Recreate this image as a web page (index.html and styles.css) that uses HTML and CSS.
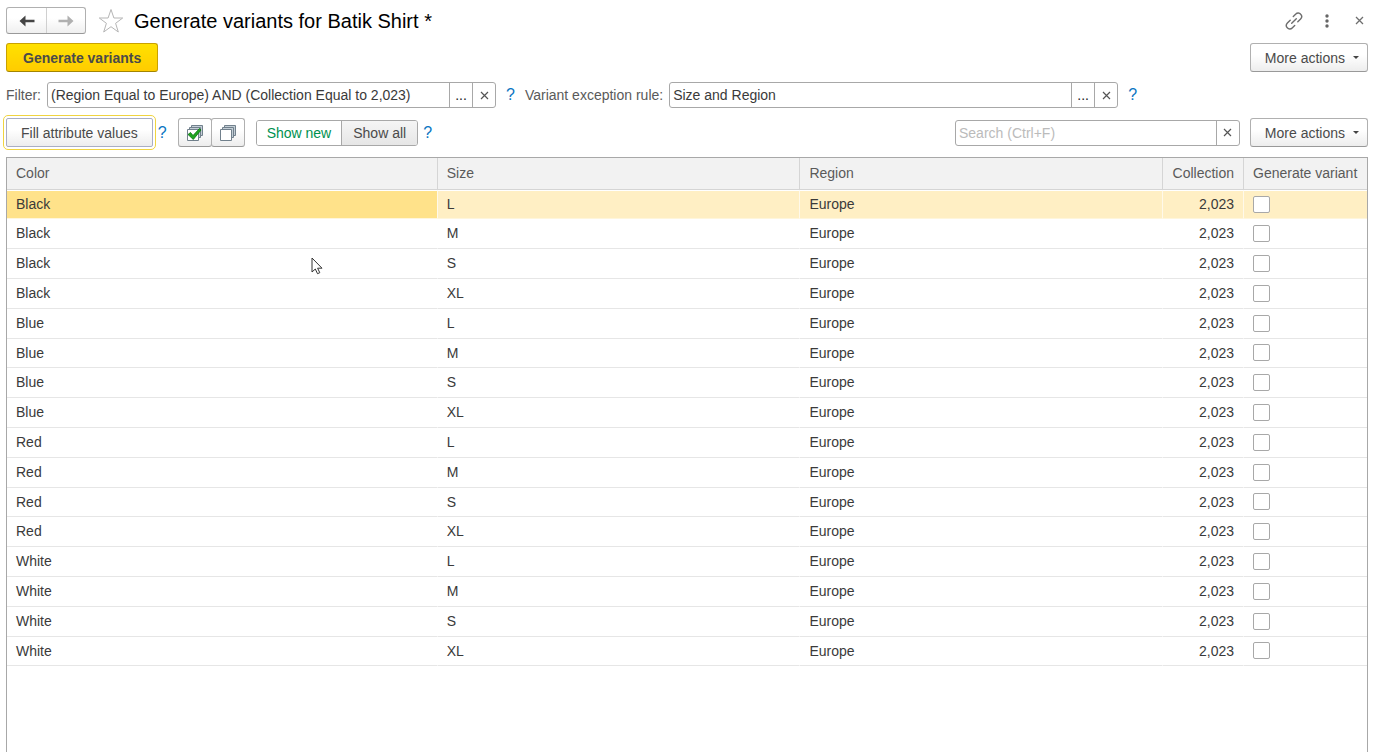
FILE: index.html
```html
<!DOCTYPE html>
<html lang="en">
<head>
    <meta charset="utf-8" />
    <meta name="viewport" content="width=device-width, initial-scale=1" />
    <title>Generate variants for Batik Shirt *</title>
    <link rel="stylesheet" href="styles.css">
    <script src="script.js" defer></script>
</head>
<body>

    <header class="titlebar">
        <div class="history">
            <button class="history__button" type="button" aria-label="Back">
                <svg width="16" height="12" viewBox="0 0 16 12"><path d="M6.500 0.500 0.500 6l6 5.500V7.300H15.500V4.700H6.500z" fill="#444"/></svg>
            </button>
            <button class="history__button" type="button" aria-label="Forward" disabled>
                <svg width="16" height="12" viewBox="0 0 16 12"><path d="M9.500 0.500 15.500 6l-6 5.500V7.300H0.500V4.700H9.500z" fill="#b0b0b0"/></svg>
            </button>
        </div>
        <button class="icon-button" type="button" aria-label="Add to favorites">
            <svg width="26" height="26" viewBox="0 0 26 26"><path d="M13 1.500 15.900 10h8.800l-7.100 5.300 2.700 8.700-7.300-5.300L5.700 24l2.700-8.700L1.300 10h8.800z" fill="#fff" stroke="#b5b5b5"/></svg>
        </button>
        <h1 class="titlebar__title">Generate variants for Batik Shirt *</h1>
        <div class="titlebar__tools">
            <button class="icon-button" type="button" aria-label="Get link">
                <svg width="18" height="18" viewBox="0 0 18 18" fill="none" stroke="#6e6e6e" stroke-width="1.400" stroke-linecap="round"><path d="M8.300 4.400 10.800 2a3.300 3.300 0 0 1 4.900.2 3.400 3.400 0 0 1-.1 4.700L12.800 9.700"/><path d="M9.700 13.600 7.200 16a3.300 3.300 0 0 1-4.900-.2 3.400 3.400 0 0 1 .1-4.700L5.200 8.300"/><path d="M6.700 11.300l4.600-4.600"/></svg>
            </button>
            <button class="icon-button" type="button" aria-label="More">
                <svg width="4" height="14" viewBox="0 0 4 14" fill="#666"><circle cx="2" cy="2" r="1.700"/><circle cx="2" cy="7" r="1.700"/><circle cx="2" cy="12" r="1.700"/></svg>
            </button>
            <button class="icon-button" type="button" aria-label="Close">
                <svg width="9" height="9" viewBox="0 0 9 9" stroke="#6e6e6e" stroke-width="1.300"><path d="M1 1l7 7M8 1 1 8"/></svg>
            </button>
        </div>
    </header>

    <main class="form">
        <div class="bar">
            <button class="button button--primary" type="button">Generate variants</button>
            <button class="button button--more" type="button">More actions</button>
        </div>

        <div class="filters">
            <label class="filters__label" for="filter">Filter:</label>
            <div class="field">
                <input class="field__input" id="filter" type="text" value="(Region Equal to Europe) AND (Collection Equal to 2,023)">
                <button class="field__button field__button--dots" type="button" aria-label="Select">...</button>
                <button class="field__button" type="button" aria-label="Clear filter">
                    <svg width="9" height="9" viewBox="0 0 9 9" stroke="#555" stroke-width="1.200"><path d="M1 1l7 7M8 1 1 8"/></svg>
                </button>
            </div>
            <a class="help" href="#">?</a>
            <label class="filters__label" for="rule">Variant exception rule:</label>
            <div class="field">
                <input class="field__input" id="rule" type="text" value="Size and Region">
                <button class="field__button field__button--dots" type="button" aria-label="Select rule">...</button>
                <button class="field__button" type="button" aria-label="Clear rule">
                    <svg width="9" height="9" viewBox="0 0 9 9" stroke="#555" stroke-width="1.200"><path d="M1 1l7 7M8 1 1 8"/></svg>
                </button>
            </div>
            <a class="help" href="#">?</a>
        </div>

        <div class="bar">
            <button class="button button--focused" type="button">Fill attribute values</button>
            <a class="help help--near" href="#">?</a>
            <div class="checks">
                <button class="button button--icon" type="button" aria-label="Select all">
                    <svg width="18" height="18" viewBox="0 0 18 18"><g stroke="#71808c" fill="#c3ced6"><path d="M5.500 1.500h11v10h-11z"/><path d="M3.500 3.500h11v10h-11z"/><path d="M1.500 5.500h11v11h-11z" fill="#fff"/></g><path d="M2 10.500 4.500 8.500 7 11.500 13.500 4.500 15 6 7.300 15.500z" fill="#1fa51f" stroke="#08700e" stroke-width=".8"/></svg>
                </button>
                <button class="button button--icon" type="button" aria-label="Clear all">
                    <svg width="18" height="18" viewBox="0 0 18 18"><g stroke="#71808c" fill="#c3ced6"><path d="M5.500 1.500h11v10h-11z"/><path d="M3.500 3.500h11v10h-11z"/><path d="M1.500 5.500h11v11h-11z" fill="#fff"/></g></svg>
                </button>
            </div>
            <div class="toggle">
                <button class="toggle__item toggle__item--active" type="button" aria-pressed="true">Show new</button>
                <button class="toggle__item" type="button" aria-pressed="false">Show all</button>
            </div>
            <a class="help help--near" href="#">?</a>
            <div class="bar__right">
                <div class="field field--search">
                    <input class="field__input" type="text" placeholder="Search (Ctrl+F)" aria-label="Search">
                    <button class="field__button" type="button" aria-label="Clear search">
                        <svg width="9" height="9" viewBox="0 0 9 9" stroke="#555" stroke-width="1.200"><path d="M1 1l7 7M8 1 1 8"/></svg>
                    </button>
                </div>
                <button class="button button--more" type="button">More actions</button>
            </div>
        </div>
    </main>

    <div class="list">
        <table class="grid">
            <thead>
                <tr>
                    <th class="grid__color">Color</th>
                    <th>Size</th>
                    <th>Region</th>
                    <th class="grid__collection">Collection</th>
                    <th class="grid__generate">Generate variant</th>
                </tr>
            </thead>
            <tbody id="variants"></tbody>
        </table>
    </div>

    <svg class="cursor" width="12" height="18" viewBox="0 0 12 18"><path d="M1 1v14l3.300-3 2.200 4.700 2.300-1-2.200-4.500H11z" fill="#fff" stroke="#333"/></svg>

</body>
</html>
```
FILE: styles.css
```css
* {
    box-sizing: border-box; margin: 0; padding: 0;
}
body {
    display: flex;
    flex-direction: column;
    height: 100vh;
    padding: 7px 10px 0 6px;
    overflow: hidden;
    background: #fff;
    color: #4a4a4a;
    font: 14px/18px "Liberation Sans", Arial, sans-serif;
}
button, input {
    font: inherit; color: inherit;
}
svg {
    display: block;
}

/* title */
.titlebar {
    display: flex;
    align-items: center;
    height: 27px;
}
.history {
    display: flex;
    height: 27px;
    margin-right: 12px;
    border: 1px solid #b0b0b0;
    border-bottom-color: #999;
    border-radius: 3px;
    background: linear-gradient(#fff 40%, #efefef);
}
.history__button {
    display: flex;
    align-items: center;
    justify-content: center;
    width: 39px;
    border: 0;
    background: none;
}
.history__button + .history__button {
    border-left: 1px solid #d0d0d0;
}
.icon-button {
    border: 0; background: none;
}
.titlebar__title {
    margin-left: 10px;
    color: #000;
    font-size: 20px;
    font-weight: normal;
}
.titlebar__tools {
    display: flex;
    align-items: center;
    margin: 0 -8px 0 auto;
}
.titlebar__tools .icon-button {
    display: flex;
    justify-content: center;
    width: 33px;
}

/* command bars */
.form {
    display: flex;
    flex-direction: column;
    gap: 10px;
    padding: 9px 0 10px;
}
.bar, .bar__right, .filters {
    display: flex;
    align-items: center;
}
.bar__right {
    flex: 0 1 413px;
    gap: 10px;
    margin-left: auto;
}
.button {
    height: 29px;
    padding: 0 14px;
    border: 1px solid #b0b0b0;
    border-bottom-color: #999;
    border-radius: 3px;
    background: linear-gradient(#fff 40%, #ededed);
    white-space: nowrap;
}
.button--primary {
    padding: 0 16px;
    border-color: #c9a100;
    border-bottom-color: #a38500;
    background: linear-gradient(#ffe100, #ffcc00);
    font-weight: bold;
}
.button--more {
    display: flex;
    align-items: center;
    gap: 8px;
    padding: 0 8px 0 14px;
}
.button--more:after {
    content: "";
    border: 3px solid transparent;
    border-top-color: #444;
    border-bottom: 0;
}
.bar .button--more:last-child {
    margin-left: auto;
}
.button--focused {
    outline: 1px solid #f0d440;
    outline-offset: 2px;
    border-color: #a9aec4;
    border-radius: 2px;
}
.checks {
    display: flex;
    margin: 0 11px;
}
.button--icon {
    display: flex;
    align-items: center;
    justify-content: center;
    width: 34px;
    padding: 0;
}
.button--icon + .button--icon {
    margin-left: -1px;
}
.toggle {
    display: flex;
    height: 26px;
    border: 1px solid #a8a8a8;
    border-radius: 3px;
    overflow: hidden;
}
.toggle__item {
    padding: 0 11px;
    border: 0;
    background: linear-gradient(#f5f5f5, #e6e6e6);
}
.toggle__item + .toggle__item {
    border-left: 1px solid #a8a8a8;
}
.toggle__item--active {
    padding: 0 10px; background: #fff; color: #009150;
}
.help {
    margin: 0 10px;
    color: #0a75c2;
    font-size: 16px;
    text-decoration: none;
}
.help--near {
    margin: 0 0 0 5px;
}

/* fields */
.filters__label {
    margin-right: 6px;
    color: #5a5a5a;
    white-space: nowrap;
}
.field {
    display: flex;
    flex: 0 1 449px;
    height: 26px;
    min-width: 0;
    border: 1px solid #a8a8a8;
    border-radius: 3px;
}
.field--search {
    flex: 1;
}
.field__input {
    flex: 1;
    min-width: 0;
    padding: 0 3px;
    border: 0;
    background: none;
    color: #3a3a3a;
}
.field__input::placeholder {
    color: #bbb;
}
.field__button {
    display: flex;
    align-items: center;
    justify-content: center;
    width: 23px;
    border: 0;
    border-left: 1px solid #a8a8a8;
    background: none;
}
.field__button--dots {
    color: #222;
}

/* list */
.list {
    flex: 1;
    min-height: 0;
    border: 1px solid #a8a8a8;
    border-bottom: 0;
    overflow: hidden;
}
.grid {
    width: 100%;
    table-layout: fixed;
    border-collapse: separate;
    border-spacing: 0;
}
.grid th, .grid td {
    padding: 0 9px;
    text-align: left;
    white-space: nowrap;
}
.grid th {
    height: 32px;
    padding-bottom: 2px;
    border-bottom: 1px solid #d5d5d5;
    background: #f2f2f2;
    color: #5a5a5a;
    font-weight: normal;
}
.grid th + th {
    border-left: 1px solid #d5d5d5;
}
.grid td {
    height: 30px;
    padding-bottom: 1px;
    border-bottom: 1px solid #e6e6e6;
    color: #3a3a3a;
}
.grid td + td {
    border-left: 1px solid transparent;
}
.grid tr:nth-child(5n + 1) td {
    height: 29px;
}
.grid .grid__color {
    width: 31.6%;
}
.grid .grid__collection {
    width: 81px; text-align: right;
}
.grid .grid__generate {
    width: 124px;
}
.grid__row--current td {
    border-top: 1px solid #fff;
    border-bottom-color: #fff6dc;
    background: #ffefc4;
}
.grid__row--current td + td {
    border-left-color: #fff9ea;
}
.grid__row--current td:first-child {
    background: #ffe28a;
}
.grid__check {
    display: block;
    width: 17px;
    height: 17px;
    border: 1px solid #a8a8a8;
    border-radius: 2px;
    background: #fff;
    appearance: none;
}
.grid__check:checked {
    background: #009150;
}

.cursor {
    position: absolute;
    top: 257px;
    left: 311px;
    pointer-events: none;
}
```
FILE: script.js
```js
let colors = ['Black', 'Blue', 'Red', 'White'],
    sizes = ['L', 'M', 'S', 'XL'],
    $variants = document.querySelector('#variants');

colors.forEach(color => {
    sizes.forEach(size => {
        $variants.insertAdjacentHTML('beforeend', `
            <tr>
                <td>${color}</td>
                <td>${size}</td>
                <td>Europe</td>
                <td class="grid__collection">2,023</td>
                <td><input class="grid__check" type="checkbox" aria-label="Generate ${color} ${size}"></td>
            </tr>
        `);
    });
});
// first row is the current one
$variants.querySelector('tr').classList.add('grid__row--current');
```
